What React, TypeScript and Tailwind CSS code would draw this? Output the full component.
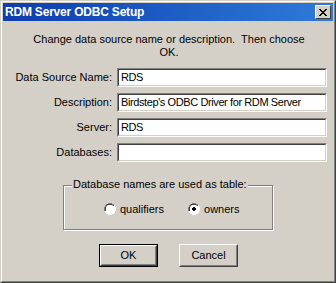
import React from "react";

const font = { fontFamily: '"Liberation Sans", Arial, sans-serif' };

function Field({ label, value }: { label: string; value: string }) {
  return (
    <div className="flex items-center h-[19px]">
      <div className="w-[110px] text-right pr-[1px] text-[11px] text-black leading-[13px]">{label}</div>
      <div className="ml-[4px] w-[210px] h-[19px] border border-t-[#808080] border-l-[#808080] border-r-white border-b-white">
        <div className="h-full border border-t-[#404040] border-l-[#404040] border-r-[#d4d0c8] border-b-[#d4d0c8] bg-white px-[2px] text-[11px] leading-[15px] tracking-[-0.4px] text-black whitespace-nowrap overflow-hidden">
          {value}
        </div>
      </div>
    </div>
  );
}

function Radio({ checked, label }: { checked?: boolean; label: string }) {
  return (
    <div className="flex items-center gap-[4px]">
      <svg width="12" height="12" viewBox="0 0 12 12">
        <path d="M4 0h4v1h2v1h1v2h1v4h-1v2h-1v1h-2v1h-4v-1h-2v-1h-1v-2h-1v-4h1v-2h1v-1h2z" fill="#ffffff" />
        <path d="M4 0h4v1h2v1h-2v-1h-4v1h-2v2h-1v4h-1v-4h1v-2h1v-1h2z" fill="#808080" />
        <path d="M4 1h4v1h2v1h-2v-1h-4v1h-1v1h-1v4h-1v-4h1v-2h1v-1h1z" fill="#404040" />
        <path d="M10 2h1v2h-1zM11 4v4h-1v-4zM10 8h1v2h-1v1h-2v-1h2z" fill="#ffffff" />
        <path d="M10 3v1h0v4h-1v1h-1v1h-4v-1h4v-1h1v-4z" fill="#d4d0c8" />
        <rect x="2" y="2" width="8" height="8" rx="3" fill="#ffffff" />
        {checked && <path d="M5 4h2v1h1v2h-1v1h-2v-1h-1v-2h1z" fill="#000000" />}
      </svg>
      <span className="text-[11px] leading-[13px] text-black">{label}</span>
    </div>
  );
}

export default function App() {
  return (
    <div className="w-[336px] h-[283px] bg-[#d4d0c8] select-none" style={font}>
      <div className="w-full h-full border border-t-[#d4d0c8] border-l-[#d4d0c8] border-r-[#404040] border-b-[#404040]">
        <div className="w-full h-full border border-t-white border-l-white border-r-[#808080] border-b-[#808080] p-[1px] flex flex-col">
          {/* Title bar */}
          <div className="h-[18px] flex items-center justify-between pl-[2px] pr-[2px] bg-gradient-to-r from-[#0f3cae] to-[#2f7bd9]">
            <span className="text-white font-bold text-[12px] leading-[14px] tracking-[-0.2px]">RDM Server ODBC Setup</span>
            <div className="w-[16px] h-[14px] bg-[#d4d0c8] border border-t-white border-l-white border-r-[#404040] border-b-[#404040] flex items-center justify-center">
              <svg width="8" height="7" viewBox="0 0 8 7">
                <path d="M0 0h2v1h1v1h2v-1h1v-1h2v1h-1v1h-1v1h-1v1h1v1h1v1h1v1h-2v-1h-1v-1h-2v1h-1v1h-2v-1h1v-1h1v-1h1v-1h-1v-1h-1v-1h-1z" fill="#000" />
              </svg>
            </div>
          </div>

          {/* Message */}
          <div className="mt-[12px] text-center text-[11px] leading-[13px] text-black pl-[2px]">
            Change data source name or description.&nbsp; Then choose
            <br />
            OK.
          </div>

          {/* Fields */}
          <div className="mt-[9px] flex flex-col gap-[6px]">
            <Field label="Data Source Name:" value="RDS" />
            <Field label="Description:" value="Birdstep's ODBC Driver for RDM Server" />
            <Field label="Server:" value="RDS" />
            <Field label="Databases:" value="" />
          </div>

          {/* Group box */}
          <div className="mt-[23px] ml-[60px] w-[210px] h-[45px] relative border border-[#808080] shadow-[inset_1px_1px_#ffffff,1px_1px_#ffffff]">
            <div className="absolute left-[8px] top-[-8px] bg-[#d4d0c8] px-[1px] text-[11px] leading-[13px] text-black">
              Database names are used as table:
            </div>
            <div className="flex items-center h-full pt-[3px] pl-[40px] gap-[24px]">
              <Radio label="qualifiers" />
              <Radio checked label="owners" />
            </div>
          </div>

          {/* Buttons */}
          <div className="mt-[14px] flex pl-[96px] gap-[21px]">
            <div className="w-[59px] h-[23px] border border-black">
              <div className="w-full h-full border border-t-white border-l-white border-r-[#404040] border-b-[#404040]">
                <div className="w-full h-full border border-t-[#d4d0c8] border-l-[#d4d0c8] border-r-[#808080] border-b-[#808080] flex items-center justify-center text-[11px] text-black">
                  OK
                </div>
              </div>
            </div>
            <div className="w-[59px] h-[23px] border border-t-white border-l-white border-r-[#404040] border-b-[#404040]">
              <div className="w-full h-full border border-t-[#d4d0c8] border-l-[#d4d0c8] border-r-[#808080] border-b-[#808080] flex items-center justify-center text-[11px] text-black">
                Cancel
              </div>
            </div>
          </div>
        </div>
      </div>
    </div>
  );
}
